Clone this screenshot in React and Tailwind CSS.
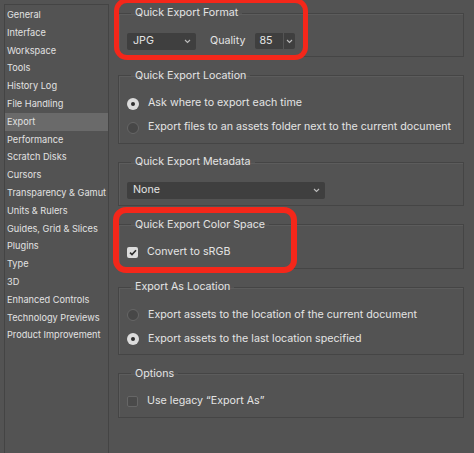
import React from "react";

const navItems = [
  "General",
  "Interface",
  "Workspace",
  "Tools",
  "History Log",
  "File Handling",
  "Export",
  "Performance",
  "Scratch Disks",
  "Cursors",
  "Transparency & Gamut",
  "Units & Rulers",
  "Guides, Grid & Slices",
  "Plugins",
  "Type",
  "3D",
  "Enhanced Controls",
  "Technology Previews",
  "Product Improvement",
];

function Chevron() {
  return (
    <svg width="7" height="5" viewBox="0 0 7 5" className="shrink-0">
      <polyline points="1,1 3.5,3.5 6,1" fill="none" stroke="#bdbdbd" strokeWidth="1.1" />
    </svg>
  );
}

function Radio({ checked }) {
  return checked ? (
    <span className="flex h-[12px] w-[12px] shrink-0 items-center justify-center rounded-full bg-[#dcdcdc]">
      <span className="h-[4px] w-[4px] rounded-full bg-[#2e2e2e]" />
    </span>
  ) : (
    <span className="h-[12px] w-[12px] shrink-0 rounded-full border border-[#666] bg-[#474747]" />
  );
}

function Checkbox({ checked }) {
  return checked ? (
    <span className="flex h-[11px] w-[11px] shrink-0 items-center justify-center rounded-[2px] bg-[#dcdcdc]">
      <svg width="8" height="7" viewBox="0 0 8 7">
        <polyline points="1,3.6 3,5.6 7,1.2" fill="none" stroke="#2b2b2b" strokeWidth="1.6" />
      </svg>
    </span>
  ) : (
    <span className="h-[11px] w-[11px] shrink-0 rounded-[2px] border border-[#666] bg-[#4a4a4a]" />
  );
}

function Group({ title, children }) {
  return (
    <fieldset className="w-[346px] border border-[#454545] shadow-[inset_1px_1px_0_#5c5c5c]">
      <legend className="ml-[12px] px-[4px] text-[10.7px] leading-[16px] text-[#e4e4e4]">{title}</legend>
      <div className="pl-[8px] pr-[8px] pt-[8px] pb-[3px]">{children}</div>
    </fieldset>
  );
}

function Row({ children }) {
  return (
    <div className="flex h-[24px] items-center gap-[9px] whitespace-nowrap text-[10.7px] text-[#e4e4e4]">
      {children}
    </div>
  );
}

export default function App() {
  return (
    <div
      className="relative flex h-[453px] w-[474px] overflow-hidden bg-[#535353]"
      style={{ fontFamily: "Inter, 'Liberation Sans', sans-serif" }}
    >
      {/* category list */}
      <aside className="ml-[4px] mt-[4px] h-[470px] w-[105px] shrink-0 border border-[#444] pt-[1px]">
        {navItems.map((item) => (
          <div
            key={item}
            className={
              "flex h-[17.8px] items-center whitespace-nowrap pl-[2px] text-[9.2px] text-[#e2e2e2] " +
              (item === "Export" ? "bg-[#6a6a6a]" : "")
            }
          >
            {item}
          </div>
        ))}
      </aside>

      {/* settings panel */}
      <main className="ml-[9px] mt-[5px] flex flex-col gap-[10.5px]">
        <Group title="Quick Export Format">
          <Row>
            <div className="flex h-[17px] w-[69px] items-center justify-between rounded-[2px] bg-[#3f3f3f] pl-[6px] pr-[5px]">
              <span>JPG</span>
              <Chevron />
            </div>
            <span className="ml-[5px]">Quality</span>
            <div className="ml-[1px] flex h-[16px] w-[40px] items-center rounded-[2px] bg-[#3f3f3f]">
              <span className="w-[28px] pl-[4px]">85</span>
              <span className="flex h-full w-[12px] items-center justify-center border-l border-[#555]">
                <Chevron />
              </span>
            </div>
          </Row>
        </Group>

        <Group title="Quick Export Location">
          <Row>
            <Radio checked />
            <span>Ask where to export each time</span>
          </Row>
          <Row>
            <Radio />
            <span>Export files to an assets folder next to the current document</span>
          </Row>
        </Group>

        <Group title="Quick Export Metadata">
          <Row>
            <div className="flex h-[17px] w-[198px] items-center justify-between rounded-[2px] bg-[#3f3f3f] pl-[6px] pr-[5px]">
              <span>None</span>
              <Chevron />
            </div>
          </Row>
        </Group>

        <Group title="Quick Export Color Space">
          <Row>
            <Checkbox checked />
            <span>Convert to sRGB</span>
          </Row>
        </Group>

        <Group title="Export As Location">
          <Row>
            <Radio />
            <span>Export assets to the location of the current document</span>
          </Row>
          <Row>
            <Radio checked />
            <span>Export assets to the last location specified</span>
          </Row>
        </Group>

        <Group title="Options">
          <Row>
            <Checkbox />
            <span>Use legacy “Export As”</span>
          </Row>
        </Group>
      </main>

      {/* red callout frames */}
      <div className="pointer-events-none absolute left-[114px] top-[-2px] h-[62px] w-[194px] rounded-[13px] border-[5px] border-[#f4271a]" />
      <div className="pointer-events-none absolute left-[113px] top-[207px] h-[66px] w-[184px] rounded-[13px] border-[6px] border-[#f4271a]" />
    </div>
  );
}
